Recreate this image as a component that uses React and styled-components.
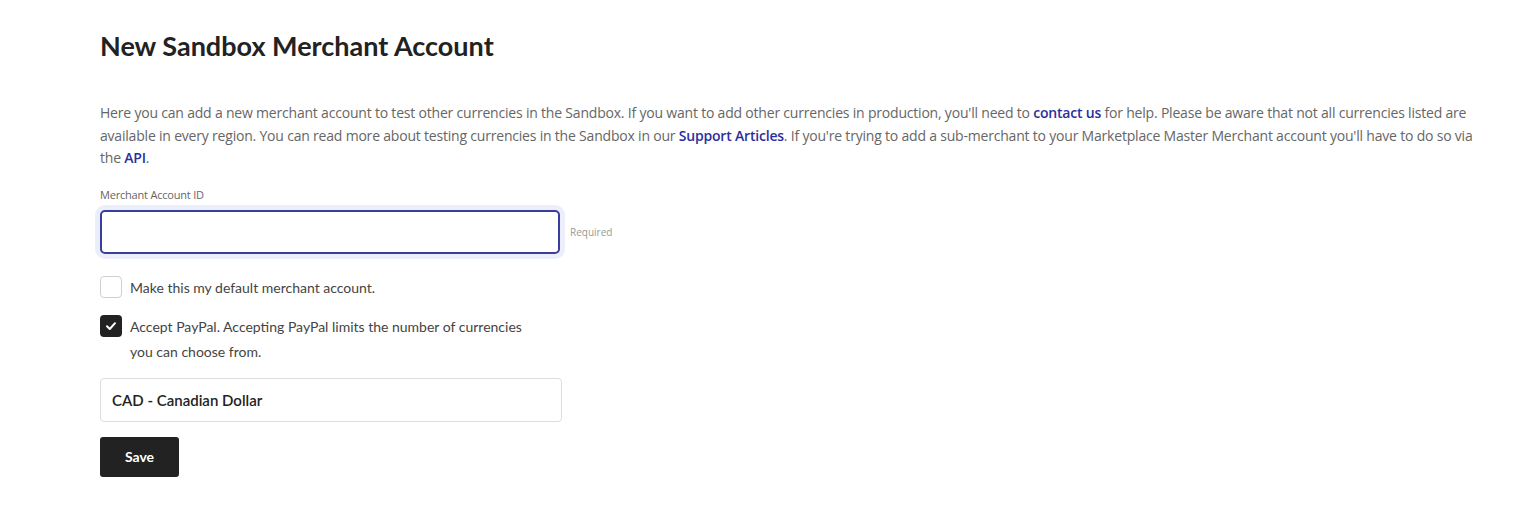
import React from "react";
import styled, { createGlobalStyle } from "styled-components";

const GlobalStyle = createGlobalStyle`
  html, body {
    margin: 0;
    padding: 0;
    background: #ffffff;
  }
  body {
    font-family: "Open Sans", "Liberation Sans", sans-serif;
    color: #333333;
  }
`;

const Page = styled.div`
  padding: 30px 40px 40px 100px;
  width: 1520px;
  box-sizing: border-box;
`;

const Title = styled.h1`
  font-family: Lato, "Open Sans", sans-serif;
  font-size: 27px;
  font-weight: 700;
  color: #222222;
  margin: 0 0 40px 0;
  line-height: 32px;
`;

const Intro = styled.p`
  font-family: "Open Sans", sans-serif;
  font-size: 14px;
  letter-spacing: -0.2px;
  line-height: 22.5px;
  color: #666666;
  margin: 0 0 17px 0;
  max-width: 1385px;
  a {
    color: #2b2f9c;
    text-decoration: none;
    font-weight: 600;
  }
`;

const Label = styled.label`
  display: block;
  font-size: 11px;
  color: #666666;
  margin-bottom: 8px;
  letter-spacing: -0.2px;
`;

const FieldRow = styled.div`
  display: flex;
  align-items: center;
  gap: 10px;
  margin-bottom: 22px;
`;

const TextInput = styled.input`
  width: 460px;
  height: 44px;
  box-sizing: border-box;
  border: 2px solid #3a3d9c;
  border-radius: 5px;
  box-shadow: 0 0 0 5px #eceefb;
  outline: none;
  font-size: 14px;
  padding: 0 10px;
`;

const Hint = styled.span`
  font-size: 10px;
  color: #999999;
`;

const CheckRow = styled.label`
  display: flex;
  align-items: flex-start;
  gap: 8px;
  margin-bottom: ${(p) => p.$gap || 15}px;
  cursor: pointer;
`;

const Box = styled.span`
  flex: 0 0 22px;
  width: 22px;
  height: 22px;
  box-sizing: border-box;
  border-radius: 4px;
  border: ${(p) => (p.$checked ? "none" : "1.5px solid #d0d0d0")};
  background: ${(p) => (p.$checked ? "#222222" : "#ffffff")};
  display: flex;
  align-items: center;
  justify-content: center;
`;

const CheckText = styled.span`
  font-family: Lato, sans-serif;
  font-size: 14px;
  line-height: 25px;
  color: #444444;
  max-width: 410px;
  margin-top: -1px;
`;

const Select = styled.div`
  width: 462px;
  height: 44px;
  box-sizing: border-box;
  border: 1px solid #dddddd;
  border-radius: 4px;
  display: flex;
  align-items: center;
  padding: 0 11px;
  font-family: Lato, sans-serif;
  font-size: 15px;
  font-weight: 600;
  color: #222222;
  margin-bottom: 15px;
`;

const SaveButton = styled.button`
  width: 79px;
  height: 40px;
  border: none;
  border-radius: 3px;
  background: #222222;
  color: #ffffff;
  font-family: Lato, sans-serif;
  font-size: 14px;
  font-weight: 700;
  cursor: pointer;
`;

function Check({ checked }) {
  return (
    <Box $checked={checked}>
      {checked && (
        <svg width="12" height="10" viewBox="0 0 12 10">
          <path
            d="M2 5.2 L4.8 8 L10 2.2"
            fill="none"
            stroke="#ffffff"
            strokeWidth="2"
            strokeLinecap="round"
            strokeLinejoin="round"
          />
        </svg>
      )}
    </Box>
  );
}

export default function App() {
  return (
    <>
      <GlobalStyle />
      <Page>
        <Title>New Sandbox Merchant Account</Title>
        <Intro>
          Here you can add a new merchant account to test other currencies in the Sandbox. If you
          want to add other currencies in production, you'll need to <a href="#">contact us</a> for
          help. Please be aware that not all currencies listed are available in every region. You
          can read more about testing currencies in the Sandbox in our{" "}
          <a href="#">Support Articles</a>. If you're trying to add a sub-merchant to your
          Marketplace Master Merchant account you'll have to do so via the <a href="#">API</a>.
        </Intro>
        <Label>Merchant Account ID</Label>
        <FieldRow>
          <TextInput type="text" />
          <Hint>Required</Hint>
        </FieldRow>
        <CheckRow>
          <Check />
          <CheckText>Make this my default merchant account.</CheckText>
        </CheckRow>
        <CheckRow $gap={14}>
          <Check checked />
          <CheckText>
            Accept PayPal. Accepting PayPal limits the number of currencies you can choose from.
          </CheckText>
        </CheckRow>
        <Select>CAD - Canadian Dollar</Select>
        <SaveButton>Save</SaveButton>
      </Page>
    </>
  );
}
